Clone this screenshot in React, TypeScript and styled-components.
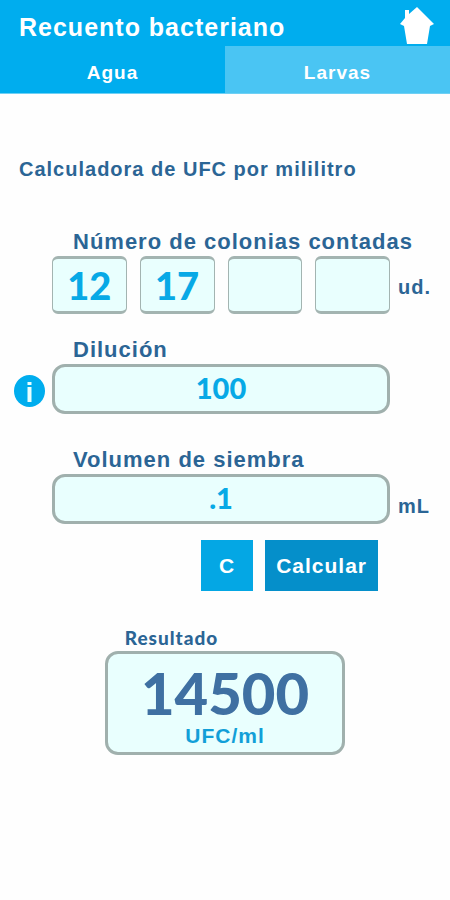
import React, { useState } from "react";
import styled, { createGlobalStyle } from "styled-components";

const GlobalStyle = createGlobalStyle`
  * { box-sizing: border-box; }
  body {
    margin: 0;
    background: #fefefe;
    color: #2b6595;
    font-family: "Liberation Sans", Arial, sans-serif;
    font-weight: 700;
  }
  button, input { font: inherit; letter-spacing: inherit; }
`;

const Page = styled.div`
  letter-spacing: 1px;
`;

const Header = styled.header`
  background: #00adee;
  color: #fff;
`;

const TitleBar = styled.div`
  display: flex;
  align-items: center;
  justify-content: space-between;
  height: 46px;
  padding: 4px 16px 0 19px;
`;

const Title = styled.h1`
  margin: 0;
  padding-top: 4px;
  font-size: 25px;
  line-height: 32px;
`;

const HomeButton = styled.button`
  padding: 0;
  border: 0;
  background: none;
  color: #fff;
  line-height: 0;
  cursor: pointer;
`;

const Tabs = styled.div`
  display: grid;
  grid-template-columns: 1fr 1fr;
`;

const Tab = styled.button<{ $active: boolean }>`
  height: 48px;
  padding: 6px 0 0;
  border: 0;
  border-bottom: 1px solid #6fd0f4;
  background: ${(p) => (p.$active ? "#00adee" : "#4ac5f3")};
  color: #fff;
  font-size: 19px;
  cursor: pointer;
`;

const Main = styled.main`
  padding: 61px 14px 40px;
`;

const Heading = styled.h2`
  margin: 0 0 45px;
  padding-left: 5px;
  font-size: 20px;
  line-height: 28px;
`;

const Form = styled.form`
  margin: 0;
`;

const Row = styled.div<{ $gap: number }>`
  display: grid;
  grid-template-columns: 30px 1fr 38px;
  column-gap: 8px;
  align-items: center;
  margin-bottom: ${(p) => p.$gap}px;
`;

const Label = styled.label`
  grid-column: 2 / 4;
  padding-left: 21px;
  font-size: 22px;
  line-height: 28px;
`;

const Side = styled.div`
  grid-column: 1;
  padding-top: 4px;
`;

const Unit = styled.span`
  grid-column: 3;
  padding-top: 4px;
  font-size: 20px;
  line-height: 28px;
`;

const LowUnit = styled(Unit)`
  padding-top: 14px;
`;

const Counts = styled.div`
  grid-column: 2;
  display: grid;
  grid-template-columns: repeat(4, 1fr);
  column-gap: 13px;
`;

const Input = styled.input`
  display: block;
  width: 100%;
  min-width: 0;
  padding: 0;
  background: #e9fffe;
  color: #07a9e6;
  font-family: Lato, sans-serif;
  text-align: center;
  letter-spacing: normal;
  outline: none;
`;

const CountInput = styled(Input)`
  height: 58px;
  border: solid #a3b4b1;
  border-width: 3px 1px;
  border-radius: 6px;
  font-size: 38px;
  font-weight: 900;
`;

const WideInput = styled(Input)`
  grid-column: 2;
  height: 50px;
  padding-bottom: 3px;
  border: 3px solid #a0b0ad;
  border-radius: 13px;
  font-size: 29px;
  font-weight: 900;
`;

const InfoButton = styled.button`
  display: block;
  width: 31px;
  height: 32px;
  padding: 0;
  border: 0;
  background: none;
  line-height: 0;
  cursor: pointer;
`;

const Actions = styled.div`
  display: flex;
  justify-content: flex-end;
  gap: 12px;
  margin: 0 58px 34px 0;
`;

const Action = styled.button<{ $primary?: boolean }>`
  height: 51px;
  min-width: 52px;
  padding: 0 11px;
  border: 0;
  background: ${(p) => (p.$primary ? "#058fca" : "#04a7e4")};
  color: #fff;
  font-size: 21px;
  cursor: pointer;
`;

const Result = styled.section`
  width: 57%;
  margin: 0 auto;
`;

const ResultTitle = styled.h3`
  margin: 0;
  padding-left: 20px;
  font-family: Lato, sans-serif;
  font-size: 19px;
  line-height: 26px;
  font-weight: 900;
`;

const ResultBox = styled.output`
  display: flex;
  flex-direction: column;
  align-items: center;
  height: 104px;
  padding-top: 8px;
  border: 3px solid #a0b0ad;
  border-radius: 13px;
  background: #e9fffe;
`;

const ResultValue = styled.span`
  color: #3f70a2;
  font-family: Lato, sans-serif;
  font-size: 58px;
  line-height: 62px;
  font-weight: 900;
  letter-spacing: normal;
`;

const ResultUnit = styled.span`
  color: #129fd8;
  font-size: 21px;
  line-height: 24px;
`;

const HomeIcon = () => (
  <svg width="34" height="37" viewBox="0 0 34 37" fill="currentColor" aria-hidden="true">
    <path d="M5 3h4v4L17 0l17 17-4 2-3 18H7L4 19l-4-2 5-6z" />
  </svg>
);

const InfoIcon = () => (
  <svg width="31" height="32" viewBox="0 0 31 32" aria-hidden="true">
    <ellipse cx="15.5" cy="16" rx="15.5" ry="16" fill="#00adee" />
    <rect x="13.5" y="7" width="4" height="3" fill="#e9fffe" />
    <rect x="13.5" y="12" width="4" height="15" fill="#e9fffe" />
  </svg>
);

export default function App() {
  const [tab, setTab] = useState("Agua");
  const [counts, setCounts] = useState(["12", "17", "", ""]);
  const [dilution, setDilution] = useState("100");
  const [volume, setVolume] = useState(".1");
  const [result, setResult] = useState("14500");

  const calculate = (event: React.FormEvent) => {
    event.preventDefault();
    const values = counts.filter((c) => c !== "").map(Number);
    const mean = values.reduce((a, b) => a + b, 0) / (values.length || 1);
    const total = (mean * Number(dilution)) / Number(volume);
    setResult(Number.isFinite(total) ? String(Math.round(total)) : "");
  };

  const clear = () => {
    setCounts(["", "", "", ""]);
    setDilution("");
    setVolume("");
    setResult("");
  };

  return (
    <Page>
      <GlobalStyle />
      <Header>
        <TitleBar>
          <Title>Recuento bacteriano</Title>
          <HomeButton type="button" aria-label="Inicio">
            <HomeIcon />
          </HomeButton>
        </TitleBar>
        <Tabs role="tablist">
          {["Agua", "Larvas"].map((name) => (
            <Tab
              key={name}
              type="button"
              role="tab"
              aria-selected={tab === name}
              $active={tab === name}
              onClick={() => setTab(name)}
            >
              {name}
            </Tab>
          ))}
        </Tabs>
      </Header>
      <Main>
        <Heading>Calculadora de UFC por mililitro</Heading>
        <Form onSubmit={calculate}>
          <Row $gap={22}>
            <Label htmlFor="count-0">Número de colonias contadas</Label>
            <Counts>
              {counts.map((value, i) => (
                <CountInput
                  key={i}
                  id={`count-${i}`}
                  aria-label={`Número de colonias contadas ${i + 1}`}
                  inputMode="numeric"
                  value={value}
                  onChange={(e) =>
                    setCounts(counts.map((c, j) => (j === i ? e.target.value : c)))
                  }
                />
              ))}
            </Counts>
            <Unit>ud.</Unit>
          </Row>
          <Row $gap={32}>
            <Label htmlFor="dilution">Dilución</Label>
            <Side>
              <InfoButton type="button" aria-label="Información">
                <InfoIcon />
              </InfoButton>
            </Side>
            <WideInput
              id="dilution"
              inputMode="decimal"
              value={dilution}
              onChange={(e) => setDilution(e.target.value)}
            />
          </Row>
          <Row $gap={16}>
            <Label htmlFor="volume">Volumen de siembra</Label>
            <WideInput
              id="volume"
              inputMode="decimal"
              value={volume}
              onChange={(e) => setVolume(e.target.value)}
            />
            <LowUnit>mL</LowUnit>
          </Row>
          <Actions>
            <Action type="button" aria-label="C, borrar" onClick={clear}>
              C
            </Action>
            <Action type="submit" $primary>
              Calcular
            </Action>
          </Actions>
        </Form>
        <Result>
          <ResultTitle>Resultado</ResultTitle>
          <ResultBox>
            <ResultValue>{result}</ResultValue>
            <ResultUnit>UFC/ml</ResultUnit>
          </ResultBox>
        </Result>
      </Main>
    </Page>
  );
}
